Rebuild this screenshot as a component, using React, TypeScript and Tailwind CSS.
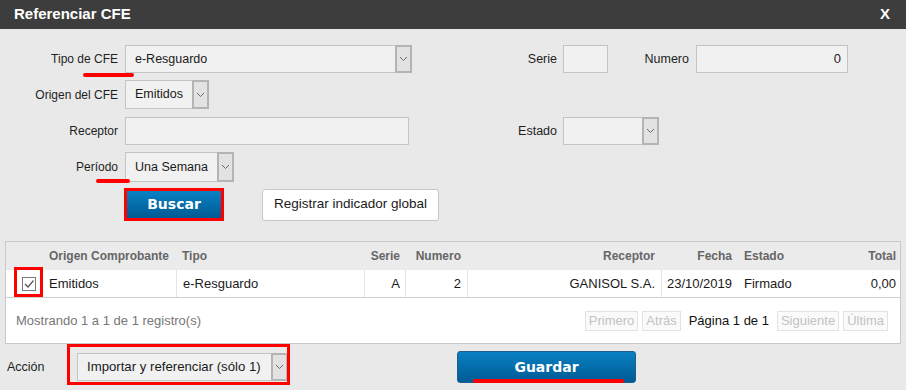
import React from "react";

const Chevron = () => (
  <svg width="9" height="6" viewBox="0 0 9 6" fill="none">
    <path d="M1 1 L4.5 4.5 L8 1" stroke="#6a6a6a" strokeWidth="1" />
  </svg>
);

function Select({ className, text, textClass = "text-[12.5px]" }: { className: string; text?: string; textClass?: string }) {
  return (
    <div className={`flex bg-[#f1f1f1] border border-[#c4c4c4] ${className}`}>
      <div className={`flex-1 flex items-center pl-[9px] text-[#1a1a1a] whitespace-nowrap overflow-hidden ${textClass}`}>
        {text}
      </div>
      <div className="w-[17px] flex items-center justify-center bg-[#e2e2e2] border-[2px] border-[#b4b4b4] -my-px -mr-px">
        <Chevron />
      </div>
    </div>
  );
}

const Label = ({ className, children }: { className: string; children: React.ReactNode }) => (
  <div className={`text-right text-[#1e1e1e] whitespace-nowrap ${className}`}>{children}</div>
);

const RedLine = ({ className }: { className: string }) => (
  <div className={`absolute bg-[#ff0000] rounded-full ${className}`} />
);

const PageBtn = ({ children }: { children: React.ReactNode }) => (
  <div className="h-[20px] px-[3px] flex items-center border border-[#e2e2e2] bg-[#fafafa] text-[13px] text-[#c2c2c2]">
    {children}
  </div>
);

export default function App() {
  return (
    <div className="relative w-[906px] h-[390px] overflow-hidden bg-[#e9e9e9] font-['Liberation_Sans',Arial,sans-serif]">
      {/* Title bar */}
      <div className="h-[29px] bg-[#3d3d3d] flex items-center justify-between pl-[14px] pr-[16px]">
        <div className="text-white font-bold text-[15px]">Referenciar CFE</div>
        <div className="text-white font-bold text-[15px]">X</div>
      </div>

      {/* Form */}
      <div className="pt-[16px]">
        {/* Row 1 */}
        <div className="flex items-center h-[28px]">
          <Label className="w-[118px] text-[12px]">Tipo de CFE</Label>
          <Select className="ml-[7px] w-[287px] h-[28px]" text="e-Resguardo" />
          <Label className="w-[145px] text-[12.5px]">Serie</Label>
          <div className="ml-[6px] w-[45px] h-[28px] bg-[#f1f1f1] border border-[#c4c4c4]" />
          <Label className="w-[81px] text-[12.5px]">Numero</Label>
          <div className="ml-[7px] w-[152px] h-[28px] bg-[#f1f1f1] border border-[#c4c4c4] flex items-center justify-end pr-[6px] text-[13px] text-[#1a1a1a]">
            0
          </div>
        </div>
        {/* Row 2 */}
        <div className="flex items-center h-[29px] mt-[7px]">
          <Label className="w-[118px] text-[12px]">Origen del CFE</Label>
          <Select className="ml-[7px] w-[84px] h-[29px]" text="Emitidos" />
        </div>
        {/* Row 3 */}
        <div className="flex items-center h-[28px] mt-[8px]">
          <Label className="w-[118px] text-[12px]">Receptor</Label>
          <div className="ml-[7px] w-[284px] h-[28px] bg-[#f1f1f1] border border-[#c4c4c4]" />
          <Label className="w-[148px] text-[12.5px]">Estado</Label>
          <Select className="ml-[6px] w-[96px] h-[28px]" />
        </div>
        {/* Row 4 */}
        <div className="flex items-center h-[30px] mt-[7px]">
          <Label className="w-[118px] text-[12px]">Período</Label>
          <Select className="ml-[7px] w-[109px] h-[30px]" text="Una Semana" />
        </div>
        {/* Buttons */}
        <div className="flex items-center mt-[6px] h-[33px]">
          <div className="ml-[124px] w-[100px] h-[33px] border-[3px] border-[#ff0000] bg-gradient-to-b from-[#0b82c4] to-[#005a93] flex items-center justify-center text-white font-bold text-[14px] font-['DejaVu_Sans',Verdana,sans-serif]">
            Buscar
          </div>
          <div className="ml-[38px] w-[177px] h-[32px] bg-white border border-[#c8c8c8] rounded-[3px] flex items-center justify-center text-[13.5px] text-[#1a1a1a]">
            Registrar indicador global
          </div>
        </div>
      </div>

      {/* Table */}
      <div className="mt-[20px] ml-[5px] w-[896px] border border-[#c9c9c9] bg-white">
        <div className="grid grid-cols-[38px_132px_188px_41px_62px_194px_76px_102px_61px] h-[28px] bg-[#ebebeb] text-[12px] font-bold text-[#666] items-center">
          <div />
          <div className="pl-[5px]">Origen Comprobante</div>
          <div className="pl-[6px]">Tipo</div>
          <div className="text-right pr-[5px]">Serie</div>
          <div className="text-right pr-[6px]">Numero</div>
          <div className="text-right pr-[6px]">Receptor</div>
          <div className="text-right pr-[5px]">Fecha</div>
          <div className="pl-[7px]">Estado</div>
          <div className="text-right pr-[4px]">Total</div>
        </div>
        <div className="grid grid-cols-[38px_132px_188px_41px_62px_194px_76px_102px_61px] h-[28px] text-[13px] text-[#1a1a1a] border-b border-[#cfcfcf]">
          <div className="flex items-center pl-[16px]">
            <svg width="14" height="14" viewBox="0 0 14 14">
              <rect x="0.5" y="0.5" width="13" height="13" fill="#fff" stroke="#7a7a7a" />
              <path d="M3 7 L6 10 L11.5 3.5" stroke="#555" strokeWidth="1.2" fill="none" />
            </svg>
          </div>
          <div className="flex items-center pl-[5px]">Emitidos</div>
          <div className="flex items-center pl-[6px] border-l border-[#e4e4e4]">e-Resguardo</div>
          <div className="flex items-center justify-end pr-[5px] border-l border-[#e4e4e4]">A</div>
          <div className="flex items-center justify-end pr-[6px] border-l border-[#e4e4e4]">2</div>
          <div className="flex items-center justify-end pr-[6px] border-l border-[#e4e4e4]">GANISOL S.A.</div>
          <div className="flex items-center justify-end pr-[5px] border-l border-[#e4e4e4]">23/10/2019</div>
          <div className="flex items-center pl-[7px]">Firmado</div>
          <div className="flex items-center justify-end pr-[4px]">0,00</div>
        </div>
        <div className="h-[45px] flex items-center justify-between pl-[10px] pr-[12px]">
          <div className="text-[13px] text-[#777]">Mostrando 1 a 1 de 1 registro(s)</div>
          <div className="flex items-center gap-[4px]">
            <PageBtn>Primero</PageBtn>
            <PageBtn>Atrás</PageBtn>
            <div className="text-[13px] text-[#111] px-[4px]">Página 1 de 1</div>
            <PageBtn>Siguiente</PageBtn>
            <PageBtn>Última</PageBtn>
          </div>
        </div>
      </div>

      {/* Bottom */}
      <div className="flex items-center mt-[7px] h-[32px]">
        <div className="ml-[7px] w-[70px] text-[12.5px] text-[#1e1e1e]">Acción</div>
        <Select className="w-[211px] h-[28px]" text="Importar y referenciar (sólo 1)" textClass="text-[13.2px]" />
        <div className="ml-[169px] w-[179px] h-[32px] rounded-[3px] border border-[#1d5f8e] bg-gradient-to-b from-[#0a80c2] to-[#005b94] flex items-center justify-center text-white font-bold text-[14px] font-['DejaVu_Sans',Verdana,sans-serif]">
          Guardar
        </div>
      </div>

      {/* Annotations */}
      <RedLine className="left-[83px] top-[73px] w-[51px] h-[4px]" />
      <RedLine className="left-[96px] top-[179px] w-[34px] h-[4px]" />
      <RedLine className="left-[473px] top-[379px] w-[151px] h-[4px]" />
      <div className="absolute left-[14px] top-[267px] w-[29px] h-[30px] border-[3px] border-[#ff0000]" />
      <div className="absolute left-[67px] top-[344px] w-[223px] h-[41px] border-[3px] border-[#ff0000]" />
    </div>
  );
}
